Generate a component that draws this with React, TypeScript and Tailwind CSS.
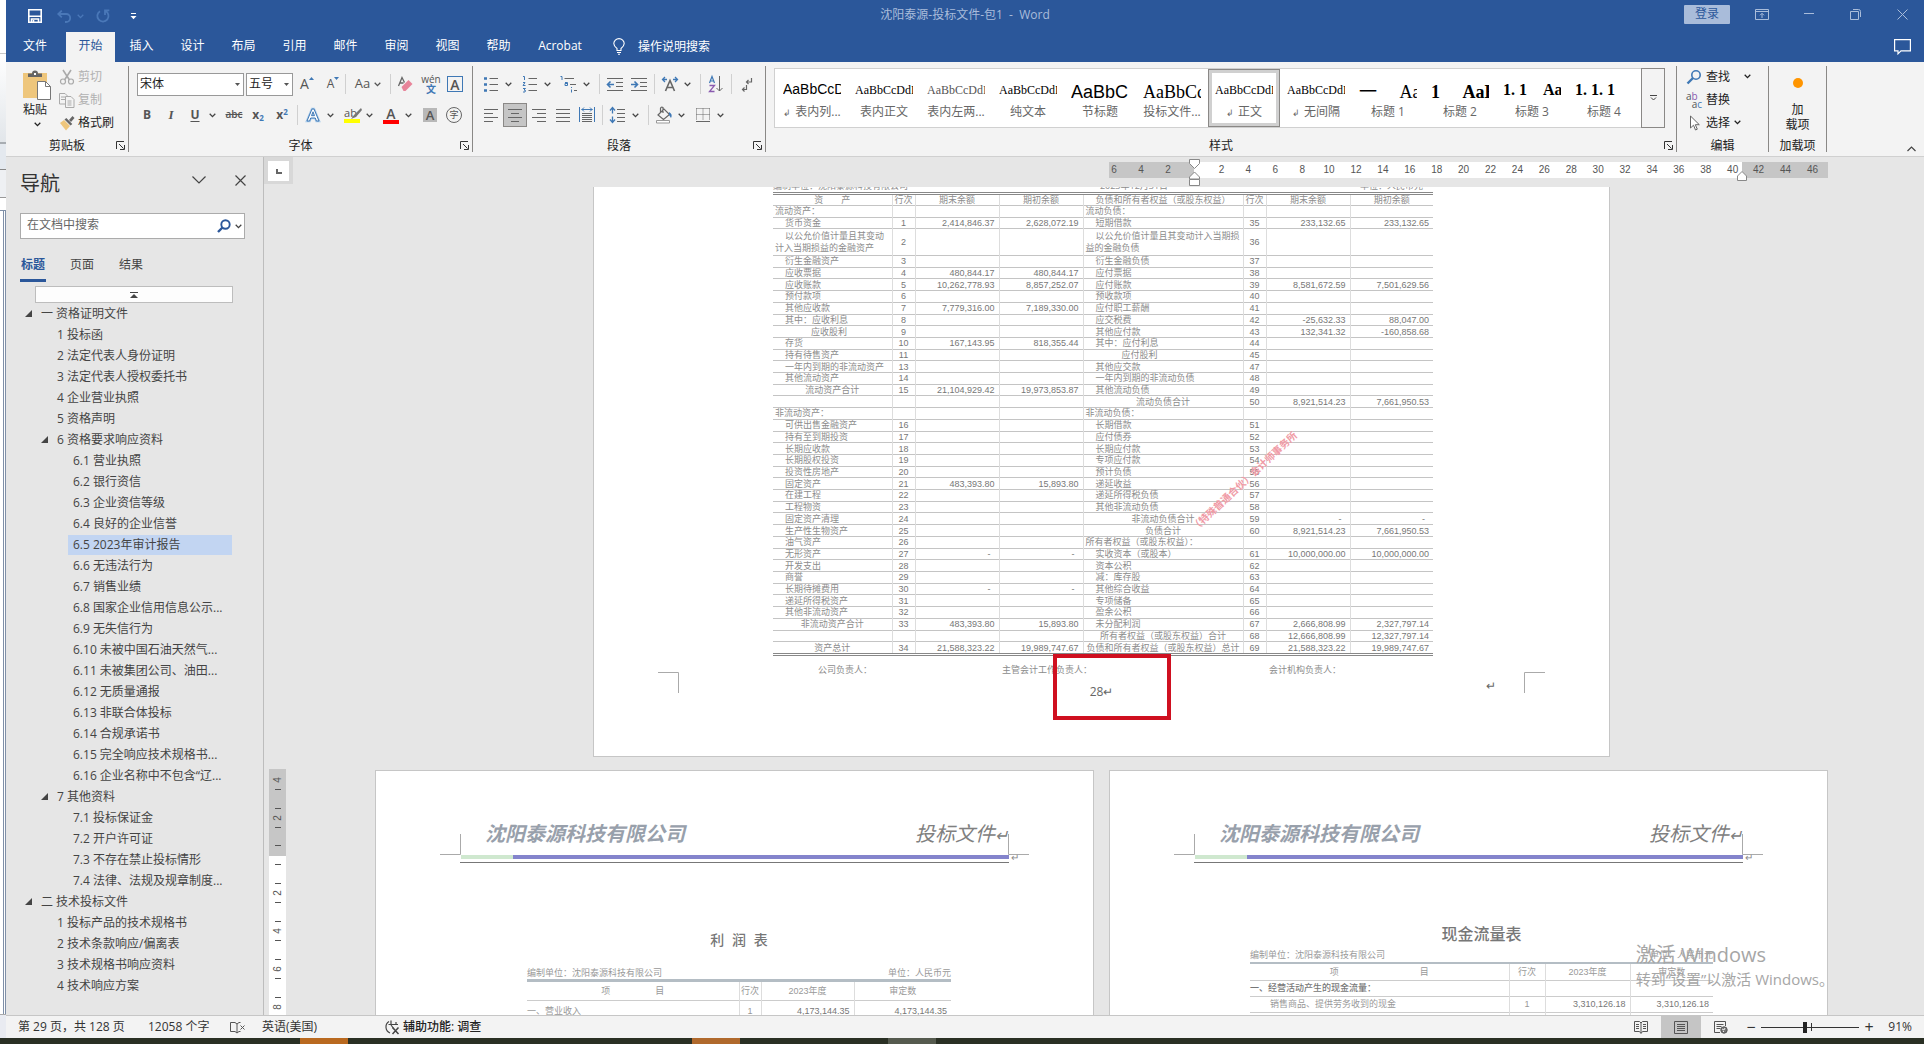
import { useState, type ReactNode } from "react";
import clsx from "clsx";

const GREY = "#666666";
const BLUE = "#3f78b5";

function Chevron({ className = "" }: { className?: string }) {
  return (
    <svg width="7" height="5" viewBox="0 0 7 5" className={className} fill="none" stroke="currentColor" strokeWidth="1.3">
      <path d="M.7.8l2.8 2.8L6.3.8" />
    </svg>
  );
}

function Icon({ children, size = 20 }: { children: ReactNode; size?: number }) {
  return (
    <svg width={size} height={size} viewBox="0 0 20 20" fill="none" stroke={GREY} strokeWidth="1" className="shrink-0">
      {children}
    </svg>
  );
}

function Tool({ label, children, active, wide }: { label: string; children: ReactNode; active?: boolean; wide?: boolean }) {
  return (
    <button
      aria-label={label}
      className={clsx(
        "h-6 flex items-center justify-center shrink-0 text-[#555]",
        wide ? "w-7" : "w-6",
        active && "bg-[#c5c5c5] border border-[#8a8886]"
      )}
    >
      {children}
    </button>
  );
}

function Split({ label, children }: { label: string; children: ReactNode }) {
  return (
    <div className="flex items-center shrink-0 mr-[5px]">
      <Tool label={label}>{children}</Tool>
      <button aria-label={`${label}选项`} className="w-[10px] h-6 flex items-center justify-center text-[#444]">
        <Chevron />
      </button>
    </div>
  );
}

function Sep() {
  return <div className="w-px h-5 bg-[#d0d0d0] mx-[3px] shrink-0" />;
}

function Launcher() {
  return (
    <button aria-label="更多设置" className="absolute right-[3px] bottom-0.5 text-[#333]">
      <svg width="9" height="9" viewBox="0 0 9 9" fill="none" stroke="currentColor">
        <path d="M.5 8V.5H8M3 3l4.500 4.500M8.500 4v4.500H4" />
      </svg>
    </button>
  );
}

function Group({ title, className, launcher, children }: { title: string; className?: string; launcher?: boolean; children: ReactNode }) {
  return (
    <section className={clsx("relative flex flex-col shrink-0 my-1 border-r border-[#8a8886]", className)}>
      <div className="h-[68px]">{children}</div>
      <div className="h-[18px] pt-[3px] text-center leading-[18px] text-[#222]">{title}</div>
      {launcher && <Launcher />}
    </section>
  );
}

const tabs = ["开始", "插入", "设计", "布局", "引用", "邮件", "审阅", "视图", "帮助"];

function TitleBar() {
  return (
    <div className="h-8 flex items-center text-[#a9bcda]">
      <div className="flex-1 flex items-center">
        <button aria-label="保存" className="ml-[22px] text-white">
          <svg width="14" height="14" viewBox="0 0 14 14" fill="none" stroke="currentColor" strokeWidth="1.6">
            <path d="M.8.8h12.400v12.400H.8z" />
            <path d="M1 7.200h12M3.500 13v-3h7v3" />
            <path d="M5.500 11v2.500" />
          </svg>
        </button>
        <button aria-label="撤消" className="ml-[15px] text-[#4a78b8]">
          <svg width="15" height="13" viewBox="0 0 15 13" fill="none" stroke="currentColor" strokeWidth="1.8">
            <path d="M4.800.6L1.200 4l3.600 3.400M1.400 4h7.800a4 4 0 0 1 0 8H8" />
          </svg>
        </button>
        <Chevron className="ml-[5px] text-[#4a78b8]" />
        <button aria-label="恢复" className="ml-3 text-[#4a78b8]">
          <svg width="14" height="14" viewBox="0 0 14 14" fill="none" stroke="currentColor" strokeWidth="1.8">
            <path d="M4 2.200A5.600 5.600 0 1 0 9.500 2M9 6V1.300h4.300" />
          </svg>
        </button>
        <button aria-label="自定义快速访问工具栏" className="ml-5 text-white">
          <svg width="7" height="7" viewBox="0 0 7 7" fill="currentColor">
            <path d="M1 0h5v1H1zM.5 3h6l-3 3.200z" />
          </svg>
        </button>
      </div>
      <h1 className="whitespace-pre -mt-0.5">沈阳泰源-投标文件-包1  -  Word</h1>
      <div className="flex-1 flex items-center justify-end pb-1">
        <button className="h-[19px] w-[46px] bg-[#a9bcda] text-[#2b579a] leading-[18px] rounded-[1px]">登录</button>
        <button aria-label="功能区显示选项" className="ml-[25px]">
          <svg width="14" height="11" viewBox="0 0 14 11" fill="none" stroke="currentColor">
            <path d="M.5.5h13v10H.5zM.5 2.500h13M7 9V4.500M5 6.300l2-2 2 2" />
          </svg>
        </button>
        <button aria-label="最小化" className="ml-[35px]">
          <svg width="10" height="10" viewBox="0 0 10 10" stroke="currentColor"><path d="M0 4.500h10" /></svg>
        </button>
        <button aria-label="还原" className="ml-9">
          <svg width="11" height="11" viewBox="0 0 11 11" fill="none" stroke="currentColor">
            <path d="M.5 2.500h8v8h-8zM3 .5h5.500q2 0 2 2V8" />
          </svg>
        </button>
        <button aria-label="关闭" className="ml-9 mr-4">
          <svg width="11" height="11" viewBox="0 0 11 11" stroke="currentColor"><path d="M.5.5l10 10M10.500.5l-10 10" /></svg>
        </button>
      </div>
    </div>
  );
}

function RibbonTabs() {
  const [active, setActive] = useState("开始");
  return (
    <nav className="h-[30px] flex items-stretch text-white">
      <button className="w-[58px] mr-px pb-[3px]">文件</button>
      {tabs.map((t) => (
        <button
          key={t}
          onClick={() => setActive(t)}
          className={clsx("w-[49px] mx-px pb-[3px]", t === active && "bg-[#f3f3f3] text-[#2b579a]")}
        >
          {t}
        </button>
      ))}
      <button className="w-[72px] pb-[3px]">Acrobat</button>
      <button className="flex items-center gap-3 ml-4 pb-px">
        <svg width="14" height="17" viewBox="0 0 14 17" fill="none" stroke="currentColor" strokeWidth="1.1">
          <path d="M5 12.500v-2C3 9 1.800 7.500 1.800 5.600a5.200 5 0 0 1 10.400 0C12.200 7.500 11 9 9 10.500v2zM5 14.500h4M6 16.300h2" />
        </svg>
        操作说明搜索
      </button>
      <button aria-label="批注" className="ml-auto mr-[13px]">
        <svg width="17" height="16" viewBox="0 0 17 16" fill="none" stroke="currentColor" strokeWidth="1.2">
          <path d="M.6.6h15.800v11.200H7l-3 3v-3H.6z" />
        </svg>
      </button>
    </nav>
  );
}

function ClipboardGroup() {
  return (
    <Group title="剪贴板" className="w-[123px]" launcher>
      <div className="flex">
        <button className="ml-[17px] mt-1 w-7 flex flex-col items-center text-[#222]">
          <svg width="28" height="30" viewBox="0 0 28 30" className="shrink-0">
            <path d="M0 3h24v25H0z" fill="#eec67c" />
            <path d="M5 7V3.500h4a3 3 0 0 1 6 0h4V7z" fill="#666" />
            <path d="M11 3h2v2h-2z" fill="#fff" />
            <path d="M14.500 11.500h8l5 5v13h-13z" fill="#fff" stroke="#777" />
            <path d="M22.500 11.500v5h5" fill="none" stroke="#777" />
          </svg>
          <span className="w-7 pr-1 leading-5">粘贴</span>
          <Chevron className="mt-0.5" />
        </button>
        <div className="flex flex-col pl-2 text-[#b1b1b1]">
          <button className="h-[23px] flex items-center gap-[3px] pb-0.5">
            <svg width="16" height="16" viewBox="0 0 16 16" fill="none" stroke="#aaa" strokeWidth="1.6">
              <path d="M4 1l6.500 10M12 1L5.500 11" />
              <circle cx="4" cy="12.500" r="2.500" strokeWidth="1.200" />
              <circle cx="12" cy="12.500" r="2.500" strokeWidth="1.200" />
            </svg>
            剪切
          </button>
          <button className="h-[23px] flex items-center gap-[3px] pb-0.5">
            <svg width="16" height="16" viewBox="0 0 16 16" fill="#f3f3f3" stroke="#aaa">
              <path d="M.5 1.500H6l2.500 2.500v8H.5zM2 5h4M2 7.500h4" />
              <path d="M6.500 4.500h5.500l3 3v8H6.500zM8.500 9h4M8.500 11h4M8.500 13h4" />
            </svg>
            复制
          </button>
          <button className="h-[23px] flex items-center gap-[3px] pb-0.5 text-[#222]">
            <svg width="16" height="16" viewBox="0 0 16 16">
              <path d="M1 8l4-3 6 6-4 4.500z" fill="#eec67c" />
              <path d="M5.500 4.500l1.800-1.500 6 6-1.800 1.500z" fill="#666" />
              <path d="M10 5l3.500-4 2 2L12 7z" fill="#666" />
            </svg>
            格式刷
          </button>
        </div>
      </div>
    </Group>
  );
}

function FontGroup() {
  return (
    <Group title="字体" className="w-[344px]" launcher>
      <div className="flex items-center h-6 mt-[6px] pl-2">
        <div className="relative mr-0.5">
          <select aria-label="字体" defaultValue="宋体" className="appearance-none w-[107px] h-[23px] border border-[#999] bg-white pl-0.5 text-[#222]">
            <option>宋体</option>
            <option>黑体</option>
          </select>
          <svg width="5" height="3" viewBox="0 0 5 3" className="absolute right-1 top-[10px] pointer-events-none"><path d="M0 0h5L2.500 3z" fill="#555" /></svg>
        </div>
        <div className="relative">
          <select aria-label="字号" defaultValue="五号" className="appearance-none w-[47px] h-[23px] border border-[#999] bg-white pl-0.5 text-[#222]">
            <option>五号</option>
            <option>四号</option>
          </select>
          <svg width="5" height="3" viewBox="0 0 5 3" className="absolute right-1 top-[10px] pointer-events-none"><path d="M0 0h5L2.500 3z" fill="#555" /></svg>
        </div>
        <Tool label="增大字号" wide>
          <span className="text-sm">A</span>
          <svg width="5" height="3" viewBox="0 0 5 3" className="mb-3"><path d="M0 3h5L2.500 0z" fill={BLUE} /></svg>
        </Tool>
        <Tool label="减小字号">
          <span className="text-xs">A</span>
          <svg width="5" height="3" viewBox="0 0 5 3" className="mb-3"><path d="M0 0h5L2.500 3z" fill={BLUE} /></svg>
        </Tool>
        <div className="w-px h-5 bg-[#d0d0d0]" />
        <button className="w-11 h-6 flex items-center justify-center gap-1 text-[13px] text-[#555]">
          Aa
          <Chevron />
        </button>
        <div className="w-px h-5 bg-[#d0d0d0]" />
        <Tool label="清除所有格式" wide>
          <Icon>
            <path d="M3.500 12L7 3.500l2.500 5M5 9h3.500" strokeWidth="1.300" />
            <path d="M6.500 13l7-7 4 4-7 7H8.500z" fill="#e8849a" stroke="none" />
          </Icon>
        </Tool>
        <Tool label="拼音指南">
          <span className="flex flex-col items-center text-[10px] leading-[9px]">
            wén
            <span className="text-[#3f78b5] font-bold leading-[10px]">文</span>
          </span>
        </Tool>
        <Tool label="字符边框">
          <span className="w-4 h-4 border border-[#3f78b5] text-sm leading-[15px] font-semibold">A</span>
        </Tool>
      </div>
      <div className="flex items-center h-6 mt-[7px] pl-[6px]">
        <Tool label="加粗"><b>B</b></Tool>
        <Tool label="倾斜"><i className="font-['Liberation_Serif'] font-bold text-[13px]">I</i></Tool>
        <Split label="下划线"><b className="underline underline-offset-2">U</b></Split>
        <Tool label="删除线"><span className="line-through font-semibold text-[10px]">abc</span></Tool>
        <Tool label="下标"><b>x<sub className="text-[8px] text-[#3f78b5]">2</sub></b></Tool>
        <Tool label="上标"><b>x<sup className="text-[8px] text-[#3f78b5]">2</sup></b></Tool>
        <Sep />
        <Split label="文本效果">
          <Icon>
            <path d="M4 16L9 4h2l5 12h-2.600l-1.100-3H7.700l-1.100 3zM8.500 10.700h3L10 6.800z" fill="#fff" stroke="#a9cbea" strokeWidth="2.400" />
            <path d="M4 16L9 4h2l5 12h-2.600l-1.100-3H7.700l-1.100 3zM8.500 10.700h3L10 6.800z" fill="#fff" stroke={BLUE} />
          </Icon>
        </Split>
        <Split label="突出显示">
          <span className="relative text-[11px] leading-3 pr-[3px] border-b-4 border-[#ff0]">
            ab
            <svg width="12" height="12" viewBox="0 0 12 12" className="absolute left-1.5 top-px"><path d="M11 0L4 7l-3 4 5-2 6-7z" fill="#777" /></svg>
          </span>
        </Split>
        <Split label="字体颜色"><span className="w-4 border-b-4 border-[#f00] font-semibold text-sm leading-[13px]">A</span></Split>
        <Tool label="字符底纹"><span className="w-[14px] h-[14px] bg-[#b8b8b8] font-semibold text-[13px] leading-[14px]">A</span></Tool>
        <Tool label="带圈字符"><span className="w-4 h-4 rounded-full border border-[#666] text-[9px] leading-[14px]">字</span></Tool>
      </div>
    </Group>
  );
}

function ParagraphGroup() {
  return (
    <Group title="段落" className="w-[293px]" launcher>
      <div className="flex items-center h-6 mt-[6px] pl-[6px]">
        <Split label="项目符号">
          <Icon>
            <path d="M3 4.500h3M3 10.500h3M3 16.500h3" stroke={BLUE} strokeWidth="2.500" />
            <path d="M8.500 4.500H17M8.500 10.500H17M8.500 16.500H17" />
          </Icon>
        </Split>
        <Split label="编号">
          <Icon>
            <path d="M3 2.500h1.500V6M3 8.500h2l-2 3h2.500M3 14.500h2.500L4 16l1.500.5-.5 1.500H3" stroke={BLUE} />
            <path d="M8.500 4.500H17M8.500 10.500H17M8.500 16.500H17" />
          </Icon>
        </Split>
        <Split label="多级列表">
          <Icon>
            <path d="M1.500 2.500H3V6M6 8.500h2.500v3H6v-2h2M12.500 13v1M12.500 15.500v3" stroke={BLUE} />
            <path d="M5.500 4.500H15M11 10.500h6M15 16.500h3" />
          </Icon>
        </Split>
        <Sep />
        <Tool label="减少缩进量">
          <Icon>
            <path d="M2 4.500h16M11 8.500h7M11 12.500h7M2 16.500h16" />
            <path d="M9 10.500H3M5.500 7.500l-3 3 3 3" stroke={BLUE} strokeWidth="1.600" />
          </Icon>
        </Tool>
        <Tool label="增加缩进量">
          <Icon>
            <path d="M2 4.500h16M11 8.500h7M11 12.500h7M2 16.500h16" />
            <path d="M2 10.500h6M5.500 7.500l3 3-3 3" stroke={BLUE} strokeWidth="1.600" />
          </Icon>
        </Tool>
        <Sep />
        <Split label="中文版式">
          <Icon>
            <path d="M5.500 17L10 6.500 14.500 17M7 13.500h6" strokeWidth="1.600" />
            <path d="M5 3L2.500 5.500 5 8M3 5.500h4M15 3l2.500 2.500L15 8M17 5.500h-4" stroke={BLUE} strokeWidth="1.300" />
          </Icon>
        </Split>
        <Sep />
        <Tool label="排序">
          <Icon>
            <path d="M3.500 9L6 2.500 8.500 9M4.500 7h3" stroke={BLUE} strokeWidth="1.200" />
            <path d="M3.500 11.500h5l-5 6h5" stroke="#8a5bb0" strokeWidth="1.300" />
            <path d="M13.500 2v15M10.500 14l3 3 3-3" />
          </Icon>
        </Tool>
        <Sep />
        <Tool label="显示编辑标记">
          <Icon>
            <path d="M14.500 4v4h-5M11.500 6L9.500 8l2 2M9.500 11v4.500h-4M7.500 13.500l-2 2 2 2" strokeWidth="1.200" />
          </Icon>
        </Tool>
      </div>
      <div className="flex items-center h-6 mt-[7px] pl-[6px]">
        <Tool label="左对齐"><Icon><path d="M3 4.500h14M3 8.500h9M3 12.500h14M3 16.500h9" /></Icon></Tool>
        <Tool label="居中" active><Icon><path d="M3 4.500h14M6 8.500h8M3 12.500h14M6 16.500h8" /></Icon></Tool>
        <Tool label="右对齐"><Icon><path d="M3 4.500h14M8 8.500h9M3 12.500h14M8 16.500h9" /></Icon></Tool>
        <Tool label="两端对齐"><Icon><path d="M3 4.500h14M3 8.500h14M3 12.500h14M3 16.500h14" /></Icon></Tool>
        <Tool label="分散对齐">
          <Icon>
            <path d="M5 8.500h10M5 10.500h10M5 12.500h10M5 14.500h10M5 16.500h10" />
            <path d="M2.500 2v15M17.500 2v15M4.500 4.500h11M7 2.500l-2 2 2 2M13 2.500l2 2-2 2" stroke={BLUE} />
          </Icon>
        </Tool>
        <Sep />
        <Split label="行和段落间距">
          <Icon>
            <path d="M9 4.500h8M9 8.500h8M9 12.500h8M9 16.500h8" />
            <path d="M4.500 3v5.500M4.500 11.500v6M2 5.500l2.500-3 2.500 3M2 14.500l2.500 3 2.500-3" stroke={BLUE} strokeWidth="1.300" />
          </Icon>
        </Split>
        <Sep />
        <Split label="底纹">
          <Icon>
            <path d="M4 10l6-6 5.500 5.500-6 5zM9 8V2.500q-2-1-2.500 1V7" strokeWidth="1.200" />
            <path d="M15 7q4 2 2 6l-2-3z" fill={BLUE} stroke="none" />
            <path d="M2.500 15.500h13v2.500h-13z" fill="#fff" stroke="#999" />
          </Icon>
        </Split>
        <Split label="边框">
          <Icon>
            <path d="M3.500 3.500h13M3.500 3.500v12M16.500 3.500v12M10 3.500v12M3.500 9.500h13" strokeDasharray="1 1" />
            <path d="M3 16.500h14" />
          </Icon>
        </Split>
      </div>
    </Group>
  );
}

const SERIF = "font-['Liberation_Serif','Noto_Sans_CJK_SC',serif]";

const styleCards: { name: string; mark?: boolean; preview: ReactNode }[] = [
  { name: "表内列...", mark: true, preview: <span className="font-['Liberation_Sans'] text-sm">AaBbCcD</span> },
  { name: "表内正文", preview: <span className={clsx(SERIF, "text-xs")}>AaBbCcDdE</span> },
  { name: "表内左两...", preview: <span className={clsx(SERIF, "text-xs text-[#555]")}>AaBbCcDdEe</span> },
  { name: "纯文本", preview: <span className={clsx(SERIF, "text-xs")}>AaBbCcDdE</span> },
  { name: "节标题", preview: <span className="font-['Liberation_Sans'] text-lg">AaBbC</span> },
  { name: "投标文件...", preview: <span className={clsx(SERIF, "text-lg")}>AaBbCc</span> },
  { name: "正文", mark: true, preview: <span className={clsx(SERIF, "text-xs")}>AaBbCcDdE</span> },
  { name: "无间隔", mark: true, preview: <span className={clsx(SERIF, "text-xs")}>AaBbCcDdE</span> },
  { name: "标题 1", preview: <span className={clsx(SERIF, "text-lg")}>一&emsp;&nbsp;Aa</span> },
  { name: "标题 2", preview: <span className={clsx(SERIF, "text-lg font-bold")}>1&emsp;&nbsp;AaB</span> },
  { name: "标题 3", preview: <span className={clsx(SERIF, "text-base font-bold")}>1. 1&emsp;Aa</span> },
  { name: "标题 4", preview: <span className={clsx(SERIF, "text-base font-bold")}>1. 1. 1</span> },
];

function StylesGroup() {
  const [picked, setPicked] = useState("正文");
  return (
    <Group title="样式" className="flex-1 min-w-0" launcher>
      <div className="flex h-[60px] mt-0.5 ml-2 mr-[11px] bg-white border border-[#d0d0d0] border-r-0">
        <div className="flex flex-1 overflow-hidden pl-px">
          {styleCards.map((s) => (
            <button
              key={s.name}
              onClick={() => setPicked(s.name)}
              className={clsx(
                "w-[72px] shrink-0 flex flex-col items-center pt-2 border",
                picked === s.name ? "border-[#8a8886] ring-3 ring-inset ring-[#d0d0d0]" : "border-transparent"
              )}
            >
              <span className="w-[58px] h-6 leading-6 overflow-hidden whitespace-nowrap text-left text-black">{s.preview}</span>
              <span className="h-5 leading-5 whitespace-nowrap text-[#666]">
                {s.mark && <span className="text-[9px] mr-1">↲</span>}
                {s.name}
              </span>
            </button>
          ))}
        </div>
        <button aria-label="其他样式" className="w-6 -my-px border border-[#8a8886] bg-[#f3f3f3] flex items-center justify-center">
          <svg width="7" height="6" viewBox="0 0 7 6" fill="none" stroke="#444"><path d="M0 .5h7M1 2.500L3.500 5 6 2.500" /></svg>
        </button>
      </div>
    </Group>
  );
}

function EditGroups() {
  return (
    <>
      <Group title="编辑" className="w-[92px]">
        <div className="flex flex-col pl-[9px] text-[#222]">
          <button className="h-[23px] flex items-center gap-1 pb-0.5">
            <svg width="16" height="16" viewBox="0 0 16 16" fill="none" stroke={BLUE}>
              <circle cx="10" cy="6" r="4.200" strokeWidth="1.600" />
              <path d="M7 9l-5.500 5.500" strokeWidth="2.400" />
            </svg>
            查找
            <Chevron className="ml-[10px]" />
          </button>
          <button className="h-[23px] flex items-center gap-1 pb-0.5">
            <span className="w-4 flex flex-col text-[10px] leading-[8px] text-left text-[#555]">
              <span>a<span className="text-[#8a5bb0]">b</span></span>
              <span className="text-right">a<span className="text-[#3f78b5]">c</span></span>
            </span>
            替换
          </button>
          <button className="h-[23px] flex items-center gap-1 pb-0.5">
            <svg width="16" height="16" viewBox="0 0 16 16" fill="#fff" stroke="#666">
              <path d="M4.500 1v12l3-2.800 2 4.800 1.800-.8-2-4.500h4z" />
            </svg>
            选择
            <Chevron />
          </button>
        </div>
      </Group>
      <Group title="加载项" className="w-[58px]">
        <button className="w-full flex flex-col items-center pt-3 leading-[15px] text-[#222]">
          <span className="w-[10px] h-[10px] rounded-full bg-[#ff9500] mb-[14px]" />
          加
          <span>载项</span>
        </button>
      </Group>
      <div className="w-[97px] shrink-0 flex items-end justify-end pr-2 pb-1">
        <button aria-label="折叠功能区">
          <svg width="9" height="6" viewBox="0 0 9 6" fill="none" stroke="#444" strokeWidth="1.200"><path d="M.5 5l4-4 4 4" /></svg>
        </button>
      </div>
    </>
  );
}

type Heading = { level: 0 | 1 | 2; text: string; open?: boolean };

const headings: Heading[] = [
  { level: 0, text: "一 资格证明文件", open: true },
  { level: 1, text: "1 投标函" },
  { level: 1, text: "2 法定代表人身份证明" },
  { level: 1, text: "3 法定代表人授权委托书" },
  { level: 1, text: "4 企业营业执照" },
  { level: 1, text: "5 资格声明" },
  { level: 1, text: "6 资格要求响应资料", open: true },
  { level: 2, text: "6.1 营业执照" },
  { level: 2, text: "6.2 银行资信" },
  { level: 2, text: "6.3 企业资信等级" },
  { level: 2, text: "6.4 良好的企业信誉" },
  { level: 2, text: "6.5 2023年审计报告" },
  { level: 2, text: "6.6 无违法行为" },
  { level: 2, text: "6.7 销售业绩" },
  { level: 2, text: "6.8 国家企业信用信息公示..." },
  { level: 2, text: "6.9 无失信行为" },
  { level: 2, text: "6.10 未被中国石油天然气..." },
  { level: 2, text: "6.11 未被集团公司、油田..." },
  { level: 2, text: "6.12 无质量通报" },
  { level: 2, text: "6.13 非联合体投标" },
  { level: 2, text: "6.14 合规承诺书" },
  { level: 2, text: "6.15 完全响应技术规格书..." },
  { level: 2, text: "6.16 企业名称中不包含“辽..." },
  { level: 1, text: "7 其他资料", open: true },
  { level: 2, text: "7.1 投标保证金" },
  { level: 2, text: "7.2 开户许可证" },
  { level: 2, text: "7.3 不存在禁止投标情形" },
  { level: 2, text: "7.4 法律、法规及规章制度..." },
  { level: 0, text: "二 技术投标文件", open: true },
  { level: 1, text: "1 投标产品的技术规格书" },
  { level: 1, text: "2 技术条款响应/偏离表" },
  { level: 1, text: "3 技术规格书响应资料" },
  { level: 1, text: "4 技术响应方案" },
];

const indent = { 0: "pl-[18px]", 1: "pl-[34px]", 2: "pl-[50px]" };

function NavPane() {
  const [current, setCurrent] = useState("6.5 2023年审计报告");
  const [tab, setTab] = useState("标题");
  return (
    <aside className="w-[258px] shrink-0 border-r border-[#bdbdbd] text-[#444]">
      <div className="flex items-center pl-[14px] pr-[17px] pt-[14px]">
        <h2 className="text-xl leading-[26px] text-[#333] mr-auto">导航</h2>
        <button aria-label="任务窗格选项" className="mr-[29px] pb-2">
          <svg width="14" height="8" viewBox="0 0 14 8" fill="none" stroke="#444" strokeWidth="1.200"><path d="M.5.5L7 7 13.500.5" /></svg>
        </button>
        <button aria-label="关闭导航" className="pb-2">
          <svg width="11" height="11" viewBox="0 0 11 11" stroke="#444" strokeWidth="1.200"><path d="M.5.5l10 10M10.500.5l-10 10" /></svg>
        </button>
      </div>
      <div className="flex items-center h-[26px] w-[225px] ml-[14px] mt-4 bg-white border border-[#ababab]">
        <input aria-label="在文档中搜索" placeholder="在文档中搜索" className="flex-1 min-w-0 pl-[6px] pb-0.5 outline-none placeholder:text-[#666]" />
        <button aria-label="搜索" className="mr-1">
          <svg width="14" height="14" viewBox="0 0 14 14" fill="none" stroke="#2b579a">
            <circle cx="8.500" cy="5.500" r="4.200" strokeWidth="1.900" />
            <path d="M5.500 8.500L1 13" strokeWidth="2.400" />
          </svg>
        </button>
        <Chevron className="mr-0.5" />
      </div>
      <div className="flex gap-[23px] ml-[14px] mt-4">
        {["标题", "页面", "结果"].map((t) => (
          <button
            key={t}
            onClick={() => setTab(t)}
            className={clsx("w-[26px] h-[27px] pb-1 border-b-[3px]", t === tab ? "border-[#2b579a] text-[#2b579a] font-bold" : "border-transparent")}
          >
            {t}
          </button>
        ))}
      </div>
      <button aria-label="跳转到开头" className="flex items-center justify-center w-[198px] h-[17px] ml-[29px] mt-1 bg-[#fdfdfd] border border-[#bdbdbd]">
        <svg width="8" height="6" viewBox="0 0 8 6" fill="#444"><path d="M0 0h8v1H0zM4 2l4 4H0z" /></svg>
      </button>
      <ul className="pb-5 pr-[31px]">
        {headings.map((h) => (
          <li key={h.text} className={clsx("h-[21px] flex items-center", indent[h.level])}>
            <span className="w-3 shrink-0">
              {h.open && <svg width="7" height="7" viewBox="0 0 7 7" className="ml-px"><path d="M7 0v7H0z" fill="#444" /></svg>}
            </span>
            <button
              onClick={() => setCurrent(h.text)}
              className={clsx("flex-1 h-5 pl-[5px] text-left whitespace-nowrap leading-5", current === h.text && "bg-[#c2d5f2]")}
            >
              {h.text}
            </button>
          </li>
        ))}
      </ul>
    </aside>
  );
}

function HorizontalRuler() {
  const main = Array.from({ length: 20 }, (_, i) => (i + 1) * 2);
  return (
    <div className="relative flex w-[719px] h-4 text-[10px] leading-4 text-[#555] font-['Liberation_Sans']">
      <div className="w-[85px] flex gap-[19px] pl-px bg-[#c6c6c6]">
        {[6, 4, 2].map((n) => <span key={n} className="w-2 text-center">{n}</span>)}
      </div>
      <div className="flex-1 bg-white">
        <div className="flex ml-[14px] -mr-1">
          {main.map((n) => <span key={n} className="flex-1 text-center">{n}</span>)}
        </div>
      </div>
      <div className="w-[86px] flex pl-[3px] bg-[#c6c6c6]">
        {[42, 44, 46].map((n) => <span key={n} className="w-[27px] text-center">{n}</span>)}
      </div>
      <svg width="12" height="29" viewBox="0 0 12 29" fill="#fff" stroke="#888" className="absolute left-20 -top-[3px]">
        <path d="M.5.5h10v4l-5 5-5-5zM.5 20v-2l5-5 5 5v2zM.5 20.500h10v6H.5z" />
      </svg>
      <svg width="10" height="10" viewBox="0 0 10 10" fill="#fff" stroke="#888" className="absolute right-[81px] top-[9px]">
        <path d="M.5 9.500V5l4.500-4.500L9.500 5v4.500z" />
      </svg>
    </div>
  );
}

function RulerCell({ n, first }: { n: number; first?: boolean }) {
  return (
    <div className={clsx("shrink-0 flex flex-col items-center justify-end", first ? "h-[30px]" : "h-[38px]")}>
      {!first && <i className="w-[6px] h-px bg-[#555]" />}
      <span className="h-[18px] flex items-center -rotate-90">{n}</span>
      <i className="w-[6px] h-px bg-[#555] mb-[9px]" />
    </div>
  );
}

function VerticalRuler() {
  return (
    <div className="w-[17px] ml-[5px] mt-[585px] flex-1 min-h-0 flex flex-col overflow-hidden text-[10px] text-[#555] font-['Liberation_Sans']">
      <div className="h-[87px] shrink-0 bg-[#c6c6c6] flex flex-col">
        <RulerCell n={4} first />
        <RulerCell n={2} />
        <i className="w-[6px] h-px bg-[#555] mx-auto mt-2" />
      </div>
      <div className="flex-1 bg-white flex flex-col">
        <div className="h-[18px] shrink-0 pt-2"><i className="block w-[6px] h-px bg-[#555] mx-auto" /></div>
        {[2, 4, 6, 8].map((n) => <RulerCell key={n} n={n} />)}
      </div>
    </div>
  );
}

// [kind, name, line no., closing, opening]; kinds: s section, i item, d nested item, w wrapped item, t total
type Side = [string, string, string?, string?, string?];

const assets: Side[] = [
  ["s", "流动资产："],
  ["i", "货币资金", "1", "2,414,846.37", "2,628,072.19"],
  ["w", "以公允价值计量且其变动计入当期损益的金融资产", "2"],
  ["i", "衍生金融资产", "3"],
  ["i", "应收票据", "4", "480,844.17", "480,844.17"],
  ["i", "应收账款", "5", "10,262,778.93", "8,857,252.07"],
  ["i", "预付款项", "6"],
  ["i", "其他应收款", "7", "7,779,316.00", "7,189,330.00"],
  ["i", "其中：应收利息", "8"],
  ["d", "应收股利", "9"],
  ["i", "存货", "10", "167,143.95", "818,355.44"],
  ["i", "持有待售资产", "11"],
  ["i", "一年内到期的非流动资产", "13"],
  ["i", "其他流动资产", "14"],
  ["t", "流动资产合计", "15", "21,104,929.42", "19,973,853.87"],
  ["s", ""],
  ["s", "非流动资产："],
  ["i", "可供出售金融资产", "16"],
  ["i", "持有至到期投资", "17"],
  ["i", "长期应收款", "18"],
  ["i", "长期股权投资", "19"],
  ["i", "投资性房地产", "20"],
  ["i", "固定资产", "21", "483,393.80", "15,893.80"],
  ["i", "在建工程", "22"],
  ["i", "工程物资", "23"],
  ["i", "固定资产清理", "24"],
  ["i", "生产性生物资产", "25"],
  ["i", "油气资产", "26"],
  ["i", "无形资产", "27", "-", "-"],
  ["i", "开发支出", "28"],
  ["i", "商誉", "29"],
  ["i", "长期待摊费用", "30", "-", "-"],
  ["i", "递延所得税资产", "31"],
  ["i", "其他非流动资产", "32"],
  ["t", "非流动资产合计", "33", "483,393.80", "15,893.80"],
  ["s", ""],
  ["t", "资产总计", "34", "21,588,323.22", "19,989,747.67"],
];

const debts: Side[] = [
  ["s", "流动负债："],
  ["i", "短期借款", "35", "233,132.65", "233,132.65"],
  ["w", "以公允价值计量且其变动计入当期损益的金融负债", "36"],
  ["i", "衍生金融负债", "37"],
  ["i", "应付票据", "38"],
  ["i", "应付账款", "39", "8,581,672.59", "7,501,629.56"],
  ["i", "预收款项", "40"],
  ["i", "应付职工薪酬", "41"],
  ["i", "应交税费", "42", "-25,632.33", "88,047.00"],
  ["i", "其他应付款", "43", "132,341.32", "-160,858.68"],
  ["i", "其中：应付利息", "44"],
  ["d", "应付股利", "45"],
  ["i", "其他应交款", "47"],
  ["i", "一年内到期的非流动负债", "48"],
  ["i", "其他流动负债", "49"],
  ["t", "流动负债合计", "50", "8,921,514.23", "7,661,950.53"],
  ["s", "非流动负债："],
  ["i", "长期借款", "51"],
  ["i", "应付债券", "52"],
  ["i", "长期应付款", "53"],
  ["i", "专项应付款", "54"],
  ["i", "预计负债", "55"],
  ["i", "递延收益", "56"],
  ["i", "递延所得税负债", "57"],
  ["i", "其他非流动负债", "58"],
  ["t", "非流动负债合计", "59", "-", "-"],
  ["t", "负债合计", "60", "8,921,514.23", "7,661,950.53"],
  ["s", "所有者权益（或股东权益）："],
  ["i", "实收资本（或股本）", "61", "10,000,000.00", "10,000,000.00"],
  ["i", "资本公积", "62"],
  ["i", "减：库存股", "63"],
  ["i", "其他综合收益", "64"],
  ["i", "专项储备", "65"],
  ["i", "盈余公积", "66"],
  ["i", "未分配利润", "67", "2,666,808.99", "2,327,797.14"],
  ["t", "所有者权益（或股东权益）合计", "68", "12,666,808.99", "12,327,797.14"],
  ["t", "负债和所有者权益（或股东权益）总计", "69", "21,588,323.22", "19,989,747.67"],
];

const kindClass: Record<string, string> = {
  s: "pl-0.5",
  i: "pl-3",
  d: "pl-[38px]",
  t: "text-center",
  w: "pl-0.5 indent-[10px] whitespace-normal leading-3",
};

function SideCells({ row, last }: { row: Side; last?: boolean }) {
  const [kind, name, no, closing, opening] = row;
  const num = clsx("text-right text-[#777]", closing === "-" ? "pr-2" : "pr-1");
  return (
    <>
      <td className={clsx("border-r border-[#ddd]", kindClass[kind])}>{name}</td>
      <td className="border-r border-[#ddd] text-center text-[#777]">{no}</td>
      <td className={clsx("border-r border-[#ddd]", num)}>{closing}</td>
      <td className={clsx(num, !last && "border-r border-[#ddd]")}>{opening}</td>
    </>
  );
}

function BalanceSheet() {
  return (
    <table className="w-[660px] h-[464px] table-fixed border-collapse border-y-[3px] border-double border-[#888] text-[9px] leading-[10px] whitespace-nowrap text-[#8c8c8c] font-['Liberation_Sans','Noto_Sans_CJK_SC',sans-serif]">
      <colgroup>
        <col className="w-[119px]" /><col className="w-[23px]" /><col className="w-[84px]" /><col className="w-[84px]" />
        <col className="w-[160px]" /><col className="w-[23px]" /><col className="w-[84px]" /><col className="w-[83px]" />
      </colgroup>
      <thead>
        <tr className="border-b border-[#c4c4c4]">
          {["资　　产", "行次", "期末余额", "期初余额", "负债和所有者权益（或股东权益）", "行次", "期末余额", "期初余额"].map((h, i) => (
            <th key={i} className="font-normal border-r border-[#ddd] last:border-r-0">{h}</th>
          ))}
        </tr>
      </thead>
      <tbody>
        {assets.map((a, i) => (
          <tr key={i} className="border-b border-[#c4c4c4] last:border-b-0">
            <SideCells row={a} />
            <SideCells row={debts[i]} last />
          </tr>
        ))}
      </tbody>
    </table>
  );
}

function CropMark({ side }: { side: "tl" | "tr" | "bl" | "br" }) {
  const d = { tl: "M0 20.500h20.500V0", tr: "M21 20.500H.5V0", bl: "M0 .5h20.500V21", br: "M21 .5H.5V21" }[side];
  return <svg width="21" height="21" viewBox="0 0 21 21" fill="none" stroke="#aaa" className="shrink-0"><path d={d} /></svg>;
}

function BalancePage() {
  return (
    <article className="relative w-[1017px] mx-auto bg-white border border-t-0 border-[#c6c6c6] pb-[56px] text-[9px] text-[#8c8c8c]">
      <div className="ml-[179px] w-[660px]">
        <div className="h-[5px] flex items-end justify-between overflow-hidden leading-[12px] pr-[10px]">
          <span>编制单位：沈阳泰源科技有限公司</span>
          <span>2023年12月31日</span>
          <span>单位：人民币元</span>
        </div>
        <BalanceSheet />
        <div className="flex mt-2 h-3 leading-3 pl-[45px]">
          <span className="w-[184px]">公司负责人：</span>
          <span className="w-[267px]">主管会计工作负责人：</span>
          <span>会计机构负责人：</span>
        </div>
      </div>
      <div className="flex h-7 -mt-1 px-16">
        <CropMark side="bl" />
        <span className="flex-1" />
        <span className="self-end text-xs leading-4 text-[#666]">28↵</span>
        <span className="flex-1 self-center text-right text-xs text-[#666]">
          <span className="mr-7">↵</span>
        </span>
        <CropMark side="br" />
      </div>
      <div className="absolute left-[579px] top-[288px] w-[142px] text-center whitespace-nowrap -rotate-43 text-[10px] leading-3 font-bold text-[#f09aa5]">
        （特殊普通合伙）会计师事务所
      </div>
      <div className="absolute left-[459px] top-[467px] w-[118px] h-[66px] border-4 border-[#cf1020]" />
    </article>
  );
}

function SheetPage({ children }: { children: ReactNode }) {
  return (
    <article className="w-[719px] h-[1000px] shrink-0 bg-white border border-[#c6c6c6]">
      <header className="flex items-end h-[34px] mt-[50px] px-16">
        <CropMark side="tl" />
        <span className="self-start flex-1 pl-6 text-xl leading-[26px] italic font-semibold text-[#98a0ab]">沈阳泰源科技有限公司</span>
        <span className="self-start text-xl leading-[26px] italic text-[#808080]">投标文件<span className="text-base">↵</span></span>
        <CropMark side="tr" />
      </header>
      <div className="flex h-1 pl-[85px]">
        <div className="w-[52px] bg-[#cfe8cf]" />
        <div className="flex-1 bg-[#8484cc]" />
        <span className="w-[84px] pl-0.5 text-[10px] leading-1 text-[#888]">↵</span>
      </div>
      <div className="h-px mt-[3px] mx-[84px] bg-[#777]" />
      {children}
    </article>
  );
}

function IncomeSheet() {
  return (
    <div className="ml-[151px] w-[424px] text-[9px] text-[#999] font-['Liberation_Sans','Noto_Sans_CJK_SC',sans-serif]">
      <h3 className="mt-[67px] text-center text-sm leading-5 font-medium text-[#777] whitespace-pre">利  润  表</h3>
      <div className="flex justify-between mt-[17px] leading-3">
        <span>编制单位：沈阳泰源科技有限公司</span>
        <span>单位：人民币元</span>
      </div>
      <table className="w-full table-fixed border-collapse border-t-[3px] border-[#b4bdc4]">
        <colgroup><col className="w-[212px]" /><col className="w-[22px]" /><col className="w-[93px]" /><col className="w-[97px]" /></colgroup>
        <tbody>
          <tr className="h-5 border-b border-[#ccc] text-center">
            <td className="border-r border-[#ddd] whitespace-pre">项　　　　　目</td>
            <td className="border-r border-[#ddd]">行次</td>
            <td className="border-r border-[#ddd]">2023年度</td>
            <td>审定数</td>
          </tr>
          <tr className="h-5">
            <td className="border-r border-[#ddd]">一、营业收入</td>
            <td className="border-r border-[#ddd] text-center">1</td>
            <td className="border-r border-[#ddd] text-right pr-1 text-[#777]">4,173,144.35</td>
            <td className="text-right pr-1 text-[#777]">4,173,144.35</td>
          </tr>
        </tbody>
      </table>
    </div>
  );
}

function CashFlowSheet() {
  return (
    <div className="ml-[140px] w-[463px] text-[9px] text-[#999] font-['Liberation_Sans','Noto_Sans_CJK_SC',sans-serif]">
      <h3 className="mt-[62px] text-center text-base leading-5 font-medium text-[#777]">现金流量表</h3>
      <div className="flex justify-between mt-1 leading-3 pb-px">
        <span>编制单位：沈阳泰源科技有限公司</span>
        <span>单位：人民币元</span>
      </div>
      <table className="w-full table-fixed border-collapse border-t-2 border-[#b4bdc4] leading-3">
        <colgroup><col className="w-[259px]" /><col className="w-9" /><col className="w-[85px]" /><col className="w-[83px]" /></colgroup>
        <tbody>
          <tr className="h-[17px] border-b border-[#ccc] text-center">
            <td className="border-r border-[#ddd]">项　　　　　　　　　目</td>
            <td className="border-r border-[#ddd]">行次</td>
            <td className="border-r border-[#ddd]">2023年度</td>
            <td>审定数</td>
          </tr>
          <tr className="h-4 border-b border-[#ccc]">
            <td className="border-r border-[#ddd] font-medium text-[#777]">一、经营活动产生的现金流量：</td>
            <td className="border-r border-[#ddd]" />
            <td className="border-r border-[#ddd]" />
            <td />
          </tr>
          <tr className="h-4 border-b border-[#ccc]">
            <td className="border-r border-[#ddd] pl-5">销售商品、提供劳务收到的现金</td>
            <td className="border-r border-[#ddd] text-center">1</td>
            <td className="border-r border-[#ddd] text-right pr-1 text-[#777]">3,310,126.18</td>
            <td className="text-right pr-1 text-[#777]">3,310,126.18</td>
          </tr>
          <tr className="h-4"><td className="border-r border-[#ddd]" /><td className="border-r border-[#ddd]" /><td className="border-r border-[#ddd]" /><td /></tr>
        </tbody>
      </table>
    </div>
  );
}

function StatusBar() {
  const [zoom, setZoom] = useState(91);
  return (
    <footer className="h-[23px] shrink-0 flex items-center bg-[#f3f3f3] border-t border-[#c6c6c6] pl-3 text-[#333]">
      <span className="w-[130px]">第 29 页，共 128 页</span>
      <span className="w-[82px]">12058 个字</span>
      <button aria-label="校对" className="mr-[17px]">
        <svg width="15" height="13" viewBox="0 0 15 13" fill="none" stroke="#555">
          <path d="M.5 1.500H5L7 3v9L5 10.500H.5zM7 3l2-1.500h1.500M7 12l2-1.500h1.500" />
          <path d="M10.500 4.500l4 4M14.500 4.500l-4 4" />
        </svg>
      </button>
      <span className="w-[122px]">英语(美国)</span>
      <button className="flex items-center font-medium text-[#222]">
        <svg width="17" height="16" viewBox="0 0 17 16" fill="none" stroke="#444" strokeWidth="1.200" className="mr-0.5">
          <path d="M5 2.500a6.500 6.500 0 0 0 1 11.500M7 1.500v4M4.500 5.500H14M7 6l3 4M12 3v3" />
          <path d="M8.500 8.500l6 6.500M14.500 8.500l-6 6.500" strokeWidth="1.500" />
        </svg>
        辅助功能: 调查
      </button>
      <div className="ml-auto flex items-center h-full pr-3">
        <button aria-label="阅读视图" className="w-10 h-full flex items-center justify-center">
          <svg width="14" height="13" viewBox="0 0 14 13" fill="none" stroke="#555"><path d="M.5.5H5.500L7 2l1.500-1.500h5v10h-5L7 12.500l-1.500-2h-5zM7 2v10M2 3.500h3M2 5.500h3M2 7.500h3M9 3.500h3M9 5.500h3M9 7.500h3" /></svg>
        </button>
        <button aria-label="页面视图" className="w-10 h-full flex items-center justify-center bg-[#c5c5c5]">
          <svg width="14" height="13" viewBox="0 0 14 13" fill="none" stroke="#555"><path d="M.5.5h13v12H.5zM3 3.500h8M3 5.500h8M3 7.500h8M3 9.500h8" /></svg>
        </button>
        <button aria-label="Web 版式视图" className="w-10 h-full flex items-center justify-center">
          <svg width="14" height="13" viewBox="0 0 14 13" fill="none" stroke="#555"><path d="M6 11.500H.5V.5h11V5M2.500 3.500h7M2.500 5.500h5M2.500 7.500h4" /><circle cx="10" cy="9" r="3.200" fill="#777" /><path d="M8 8l2 1 1-2M9 11l1-1" stroke="#eee" /></svg>
        </button>
        <button aria-label="缩小" className="ml-[5px] w-[10px] text-base leading-4" onClick={() => setZoom(zoom - 10)}>−</button>
        <div className="relative flex items-center w-[98px] mx-[5px]">
          <i className="absolute left-[50px] w-px h-2 bg-[#333]" />
          <input
            type="range"
            aria-label="显示比例"
            min={10}
            max={190}
            value={zoom}
            onChange={(e) => setZoom(Number(e.target.value))}
            className="relative appearance-none w-full h-px bg-[#333] [&::-webkit-slider-thumb]:appearance-none [&::-webkit-slider-thumb]:w-1 [&::-webkit-slider-thumb]:h-[11px] [&::-webkit-slider-thumb]:bg-[#222]"
          />
        </div>
        <button aria-label="放大" className="w-[10px] text-base leading-4" onClick={() => setZoom(zoom + 10)}>+</button>
        <span className="w-[38px] text-right">{zoom}%</span>
      </div>
    </footer>
  );
}

function BackgroundEdge() {
  return (
    <div className="w-[6px] shrink-0 flex flex-col bg-white">
      <div className="h-[54px] border-b border-[#c8c8c8]" />
      <div className="h-[90px] bg-linear-to-b from-white to-[#e2e6ea] border-b-2 border-[#a8adb2]" />
      <div className="h-[26px] bg-[#e4e9ef] border-b border-[#888]" />
      <div className="h-[28px] bg-[#eef0f3] border-b border-[#999]" />
      <div className="h-[12px]" />
      <div className="flex-1 border-t border-r-[3px] border-double border-[#8090a8]" />
      <div className="h-[24px] bg-[#e9ebf1] border-t border-[#aaa]" />
    </div>
  );
}

export default function App() {
  return (
    <div className="h-screen flex flex-col overflow-hidden text-xs font-['Open_Sans','Noto_Sans_CJK_SC',sans-serif]">
      <div className="flex-1 min-h-0 flex">
        <BackgroundEdge />
        <div className="flex-1 min-w-0 flex flex-col bg-[#e6e6e6]">
          <div className="bg-[#2b579a] shrink-0">
            <TitleBar />
            <RibbonTabs />
          </div>
          <div className="flex shrink-0 bg-[#f3f3f3] border-b border-[#d0d0d0]">
            <ClipboardGroup />
            <FontGroup />
            <ParagraphGroup />
            <StylesGroup />
            <EditGroups />
          </div>
          <div className="flex-1 min-h-0 flex">
            <NavPane />
            <main className="relative flex-1 min-w-0 flex overflow-hidden">
              <div className="w-[29px] shrink-0 flex flex-col">
                <div className="bg-[#d8d8d8] p-1 h-[27px]">
                  <button aria-label="制表位" className="w-[21px] h-[20px] bg-white flex items-center justify-center">
                    <svg width="6" height="5" viewBox="0 0 6 5" fill="none" stroke="#666" strokeWidth="2"><path d="M1 0v4h5" /></svg>
                  </button>
                </div>
                <VerticalRuler />
              </div>
              <div className="flex-1 min-w-0 pr-[14px]">
                <div className="w-[1453px] mx-auto flex justify-end pt-[5px] h-[30px]">
                  <HorizontalRuler />
                </div>
                <BalancePage />
                <div className="flex justify-center gap-[15px] mt-[13px]">
                  <SheetPage><IncomeSheet /></SheetPage>
                  <SheetPage><CashFlowSheet /></SheetPage>
                </div>
              </div>
              <div className="absolute right-[90px] bottom-6 text-[#a6a6a6] pointer-events-none">
                <p className="text-xl leading-6">激活 Windows</p>
                <p className="text-[15px] leading-6">转到“设置”以激活 Windows。</p>
              </div>
            </main>
          </div>
          <StatusBar />
        </div>
      </div>
      <div className="h-[6px] shrink-0 flex bg-[#2a3024]">
        <div className="w-12 ml-[300px] bg-[#b9691f]" />
        <div className="w-12 ml-[344px] bg-[#b0692c]" />
        <div className="w-12 ml-[148px] bg-[#555a4e]" />
      </div>
    </div>
  );
}
